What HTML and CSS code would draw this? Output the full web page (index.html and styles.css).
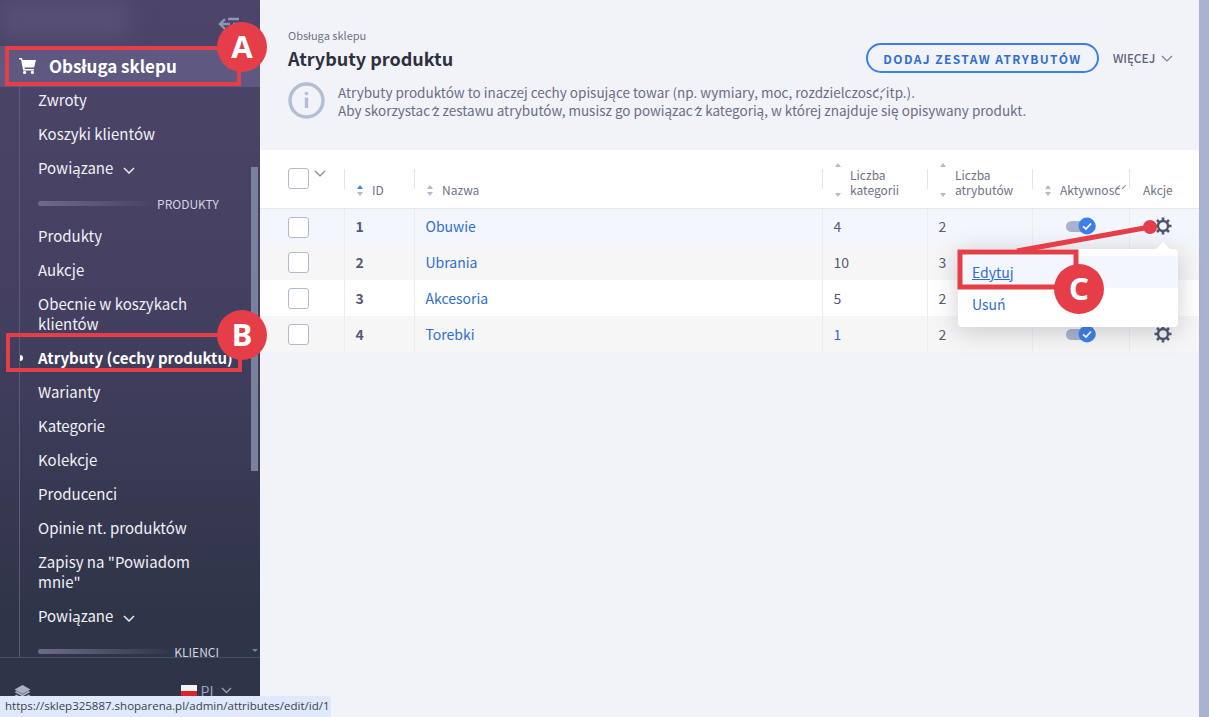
FILE: index.html
```html
<!DOCTYPE html>
<html lang="pl">
<head>
    <meta charset="UTF-8">
    <title>Atrybuty produktu</title>
    <link rel="stylesheet" href="styles.css">
</head>
<body>
<div class="app">
    <aside class="sidebar">
        <div class="sidebar-top">
            <div class="logo-blur"></div>
            <svg class="collapse-icon" width="22" height="14" viewBox="0 0 22 14"><path d="M7 2 2 7l5 5M2 7h10M10 2h11M15 7h6M15 12h6" fill="none" stroke="#8f93b8" stroke-width="2.4"/></svg>
        </div>
        <div class="module-row">
            <svg class="cart-icon" width="17" height="17" viewBox="0 0 17 17"><path d="M0 1h3l.6 2H17l-2 7.5H5.4L5.8 12H15v1.6H4.2L2 2.6H0z" fill="#fff"/><circle cx="5.6" cy="15.4" r="1.6" fill="#fff"/><circle cx="13.4" cy="15.4" r="1.6" fill="#fff"/></svg>
            <span>Obsługa sklepu</span>
        </div>
        <nav class="nav">
            <a class="nav-item">Zwroty</a>
            <a class="nav-item">Koszyki klientów</a>
            <a class="nav-item">Powiązane <svg class="nav-chevron" width="12" height="7" viewBox="0 0 12 7"><path d="m1 1 5 5 5-5" fill="none" stroke="#e9e8f0" stroke-width="1.5"/></svg></a>
            <div class="nav-sep"><i></i><span>PRODUKTY</span></div>
            <a class="nav-item">Produkty</a>
            <a class="nav-item">Aukcje</a>
            <a class="nav-item">Obecnie w koszykach klientów</a>
            <a class="nav-item current">Atrybuty (cechy produktu)</a>
            <a class="nav-item">Warianty</a>
            <a class="nav-item">Kategorie</a>
            <a class="nav-item">Kolekcje</a>
            <a class="nav-item">Producenci</a>
            <a class="nav-item">Opinie nt. produktów</a>
            <a class="nav-item">Zapisy na "Powiadom mnie"</a>
            <a class="nav-item">Powiązane <svg class="nav-chevron" width="12" height="7" viewBox="0 0 12 7"><path d="m1 1 5 5 5-5" fill="none" stroke="#e9e8f0" stroke-width="1.5"/></svg></a>
            <div class="nav-sep"><i></i><span>KLIENCI</span></div>
            <a class="nav-item">Klienci</a>
            <div class="nav-thumb"></div>
            <div class="nav-arrow"></div>
        </nav>
        <div class="sidebar-foot">
            <svg class="layers-icon" width="17" height="16" viewBox="0 0 17 16"><path d="m8.500 0 8 4.500-8 4.500-8-4.500zM.5 7l2-1 6 3.500 6-3.500 2 1-8 4.500zM.5 10.500l2-1 6 3.500 6-3.500 2 1-8 4.500z" fill="#a9b0c6"/></svg>
            <div class="lang">
                <span class="flag"></span>
                <span>PL</span>
                <svg width="11" height="7" viewBox="0 0 11 7"><path d="m1 1 4.500 4.500L10 1" fill="none" stroke="#9aa1b8" stroke-width="1.3"/></svg>
            </div>
        </div>
    </aside>

    <main class="main">
        <header class="page-head">
            <div class="crumb">Obsługa sklepu</div>
            <div class="title-row">
                <h1>Atrybuty produktu</h1>
                <div class="actions">
                    <button class="btn-outline">DODAJ ZESTAW ATRYBUTÓW</button>
                    <span class="more">WIĘCEJ <svg width="12" height="7" viewBox="0 0 12 7"><path d="m1 1 5 5 5-5" fill="none" stroke="#7d8199" stroke-width="1.2"/></svg></span>
                </div>
            </div>
            <div class="info">
                <svg width="37" height="37" viewBox="0 0 37 37"><circle cx="18.500" cy="18.500" r="16.500" fill="none" stroke="#b3bdd4" stroke-width="3.400"/><circle cx="18.500" cy="11.500" r="1.800" fill="#b3bdd4"/><rect x="16.800" y="15.500" width="3.400" height="10.500" fill="#b3bdd4"/></svg>
                <p>Atrybuty produktów to inaczej cechy opisujące towar (np. wymiary, moc, rozdzielczość, itp.).<br>Aby skorzystać z zestawu atrybutów, musisz go powiązać z kategorią, w której znajduje się opisywany produkt.</p>
            </div>
        </header>

        <table class="grid">
            <colgroup>
                <col class="c-check"><col class="c-id"><col class="c-name"><col class="c-num"><col class="c-num"><col class="c-active"><col>
            </colgroup>
            <thead>
                <tr>
                    <th class="th-check"><span class="box"></span><svg class="th-chevron" width="12" height="7" viewBox="0 0 12 7"><path d="m1 1 5 5 5-5" fill="none" stroke="#7d8199" stroke-width="1.2"/></svg></th>
                    <th><span class="sort asc"></span>ID</th>
                    <th><span class="sort"></span>Nazwa</th>
                    <th class="th-two"><span class="sort tall"></span><span>Liczba<br>kategorii</span></th>
                    <th class="th-two"><span class="sort tall"></span><span>Liczba<br>atrybutów</span></th>
                    <th><span class="sort"></span>Aktywność</th>
                    <th class="th-last">Akcje</th>
                </tr>
            </thead>
            <tbody>
                <tr class="hover">
                    <td><span class="box"></span></td><td class="id">1</td><td><a class="link">Obuwie</a></td><td>4</td><td>2</td>
                    <td class="t-center"><span class="toggle"><svg width="18" height="18" viewBox="0 0 18 18"><circle cx="9" cy="9" r="8.500" fill="#3b80e8"/><path d="m5 9.300 3 2.700 5-5.500" fill="none" stroke="#fff" stroke-width="1.800"/></svg></span></td>
                    <td class="t-gear"><svg class="gear" width="18" height="18" viewBox="0 0 18 18"><use href="#gear"/></svg></td>
                </tr>
                <tr class="odd">
                    <td><span class="box"></span></td><td class="id">2</td><td><a class="link">Ubrania</a></td><td>10</td><td>3</td>
                    <td class="t-center"><span class="toggle"><svg width="18" height="18" viewBox="0 0 18 18"><circle cx="9" cy="9" r="8.500" fill="#3b80e8"/><path d="m5 9.300 3 2.700 5-5.500" fill="none" stroke="#fff" stroke-width="1.800"/></svg></span></td>
                    <td class="t-gear"><svg class="gear" width="18" height="18" viewBox="0 0 18 18"><use href="#gear"/></svg></td>
                </tr>
                <tr>
                    <td><span class="box"></span></td><td class="id">3</td><td><a class="link">Akcesoria</a></td><td>5</td><td>2</td>
                    <td class="t-center"><span class="toggle"><svg width="18" height="18" viewBox="0 0 18 18"><circle cx="9" cy="9" r="8.500" fill="#3b80e8"/><path d="m5 9.300 3 2.700 5-5.500" fill="none" stroke="#fff" stroke-width="1.800"/></svg></span></td>
                    <td class="t-gear"><svg class="gear" width="18" height="18" viewBox="0 0 18 18"><use href="#gear"/></svg></td>
                </tr>
                <tr class="odd">
                    <td><span class="box"></span></td><td class="id">4</td><td><a class="link">Torebki</a></td><td><a class="link">1</a></td><td>2</td>
                    <td class="t-center"><span class="toggle"><svg width="18" height="18" viewBox="0 0 18 18"><circle cx="9" cy="9" r="8.500" fill="#3b80e8"/><path d="m5 9.300 3 2.700 5-5.500" fill="none" stroke="#fff" stroke-width="1.800"/></svg></span></td>
                    <td class="t-gear"><svg class="gear" width="18" height="18" viewBox="0 0 18 18"><use href="#gear"/></svg></td>
                </tr>
            </tbody>
        </table>
    </main>
    <div class="page-scroll"></div>
</div>

<!-- menu akcji nad tabela -->
<div class="menu">
    <a class="menu-item active">Edytuj</a>
    <a class="menu-item">Usuń</a>
</div>

<!-- adnotacje na zrzucie -->
<svg class="marks" width="1209" height="717" viewBox="0 0 1209 717">
    <defs>
        <symbol id="gear" viewBox="0 0 18 18">
            <circle cx="9" cy="9" r="5" fill="none" stroke="#4f5570" stroke-width="2.400"/>
            <path d="M9 .5v3.500M9 14v3.500M.5 9H4M14 9h3.500M3 3l2.500 2.500M12.500 12.500 15 15M15 3l-2.500 2.500M5.500 12.500 3 15" stroke="#4f5570" stroke-width="2.600"/>
        </symbol>
    </defs>
    <g fill="none" stroke="#e53e48">
        <rect x="7" y="48" width="232" height="36" stroke-width="4"/>
        <rect x="8" y="335" width="232" height="35" stroke-width="4"/>
        <rect x="960" y="252" width="116" height="35" stroke-width="5"/>
        <path d="M1017 251 1150 227" stroke-width="5"/>
    </g>
    <g fill="#e53e48">
        <circle cx="242" cy="47" r="25"/>
        <circle cx="242" cy="335" r="25"/>
        <circle cx="1079" cy="289" r="25"/>
        <circle cx="1150" cy="227" r="7"/>
    </g>
    <g class="mark-text">
        <text x="242" y="58">A</text>
        <text x="242" y="346">B</text>
        <text x="1079" y="300">C</text>
    </g>
</svg>

<div class="status-url">https://sklep325887.shoparena.pl/admin/attributes/edit/id/1</div>
</body>
</html>
```
FILE: styles.css
```css
* {
    box-sizing: border-box;
}

html, body {
    margin: 0;
    height: 100%;
    overflow: hidden;
}

body {
    position: relative;
    font-family: "Noto Sans CJK SC", "Noto Sans", sans-serif;
    font-size: 13px;
    color: #5a5f7a;
    background-color: #f2f3f8;
}

.app {
    display: flex;
    height: 717px;
}

/* sidebar */
.sidebar {
    position: relative;
    flex: 0 0 260px;
    display: flex;
    flex-direction: column;
    overflow: hidden;
    background: linear-gradient(180deg, #4c4569 0%, #454062 40%, #2f3549 85%, #2f3549 100%);
}

.sidebar-top {
    position: relative;
    height: 46px;
    flex: none;
}

.logo-blur {
    position: absolute;
    left: 0;
    top: 0;
    width: 130px;
    height: 38px;
    background-color: #574f74;
    filter: blur(10px);
}

.collapse-icon {
    position: absolute;
    left: 218px;
    top: 17px;
}

.module-row {
    display: flex;
    align-items: center;
    height: 41px;
    flex: none;
    padding-left: 19px;
    padding-bottom: 2px;
    background-color: #5f5880;
    color: #fff;
    font-size: 17px;
    font-weight: 700;
}

.cart-icon {
    margin-right: 13px;
}

.nav {
    position: relative;
    flex: 1;
    min-height: 0;
    overflow: hidden;
    margin-left: 19px;
    padding: 0 41px 0 0;
    border-left: 1px solid #5d5a7a;
}

.nav-item {
    display: block;
    padding: 7px 0 7px 18px;
    font-size: 15px;
    line-height: 20px;
    color: #f1f0f5;
}

.nav-item:first-child {
    margin-top: -4px;
}

.nav-chevron {
    margin-left: 6px;
    vertical-align: 0;
}

.nav-item.current {
    position: relative;
    color: #fff;
    font-weight: 700;
    white-space: nowrap;
}

.nav-item.current::before {
    content: "";
    position: absolute;
    left: -3px;
    top: 14px;
    width: 6px;
    height: 6px;
    border-radius: 50%;
    background-color: #fff;
}

.nav-sep {
    display: flex;
    align-items: center;
    height: 34px;
    padding-left: 18px;
    padding-top: 3px;
    font-size: 12px;
    color: #d5d4e0;
}

.nav-sep i {
    flex: 1;
    height: 5px;
    border-radius: 3px;
    background: linear-gradient(90deg, #6e6b8a, rgba(110, 107, 138, 0));
}

.nav-sep span {
    margin-left: 0;
}

.nav-thumb {
    position: absolute;
    right: 2px;
    top: 80px;
    width: 7px;
    height: 304px;
    background-color: #7a819f;
}

.nav-arrow {
    position: absolute;
    right: 2px;
    bottom: 5px;
    border-left: 3px solid transparent;
    border-right: 3px solid transparent;
    border-top: 3px solid #7a819f;
}

.sidebar-foot {
    display: flex;
    justify-content: space-between;
    height: 60px;
    flex: none;
    padding: 27px 28px 0 14px;
    border-top: 1px solid #4a4f68;
    color: #9aa1b8;
}

.lang {
    display: flex;
    align-items: center;
    gap: 4px;
    height: 11px;
    font-size: 14px;
}

.flag {
    width: 16px;
    height: 11px;
    background: linear-gradient(180deg, #f4f4f4 50%, #e0202a 50%);
}

/* main */
.main {
    flex: 1;
    min-width: 0;
}

.page-head {
    height: 150px;
    padding: 28px 26px 0 28px;
}

.crumb {
    font-size: 11px;
    line-height: 14px;
    color: #6f7288;
}

.title-row {
    display: flex;
    align-items: center;
    justify-content: space-between;
    margin-top: 1px;
}

h1 {
    margin: 0;
    font-size: 18px;
    line-height: 30px;
    font-weight: 600;
    color: #2c3040;
}

.actions {
    display: flex;
    align-items: center;
    gap: 14px;
}

.btn-outline {
    height: 30px;
    padding: 0 15px;
    border: 2px solid #3b80e8;
    border-radius: 15px;
    background: none;
    font-family: inherit;
    font-size: 12px;
    font-weight: 600;
    letter-spacing: 1.4px;
    color: #2f6fd0;
}

.more {
    font-size: 12px;
    font-weight: 500;
    color: #5f6380;
}

.more svg {
    margin-left: 3px;
    vertical-align: 1px;
}

.info {
    display: flex;
    align-items: center;
    gap: 13px;
    margin-top: 9px;
}

.info p {
    margin: 0;
    font-size: 13.500px;
    line-height: 18px;
    color: #6a6d86;
}

.grid {
    width: 939px;
    table-layout: fixed;
    border-collapse: collapse;
    background-color: #fff;
}

.c-check { width: 84px; }
.c-id { width: 70px; }
.c-name { width: 408px; }
.c-num { width: 105px; }
.c-active { width: 97px; }

th {
    position: relative;
    height: 58px;
    padding: 0 0 11px 13px;
    vertical-align: bottom;
    text-align: left;
    font-size: 12px;
    line-height: 15px;
    font-weight: 400;
    color: #6f7288;
    border-bottom: 1px solid #e8e9ef;
}

th + th::before {
    content: "";
    position: absolute;
    left: 0;
    top: 19px;
    height: 20px;
    border-left: 1px solid #e3e4ea;
}

.th-check {
    padding: 0 0 0 28px;
    vertical-align: middle;
}

.th-check .box {
    vertical-align: middle;
}

.th-chevron {
    margin-left: 5px;
    vertical-align: 5px;
}

.th-two span:last-child {
    display: inline-block;
    vertical-align: bottom;
}

.th-last {
    padding-left: 14px;
}

.sort {
    display: inline-block;
    position: relative;
    width: 7px;
    height: 11px;
    margin-right: 8px;
    vertical-align: -1px;
}

.sort::before, .sort::after {
    content: "";
    position: absolute;
    left: 0;
    border-left: 3.500px solid transparent;
    border-right: 3.500px solid transparent;
}

.sort::before {
    top: 0;
    border-bottom: 4px solid #b3bad0;
}

.sort::after {
    bottom: 0;
    border-top: 4px solid #b3bad0;
}

.sort.asc::before {
    border-bottom-color: #3b80e8;
}

.sort.tall {
    height: 34px;
    vertical-align: bottom;
}

td {
    height: 36px;
    padding: 0 0 0 11px;
    font-size: 14px;
    color: #555a75;
    border-left: 1px solid #ebecf1;
}

td:first-child {
    padding-left: 28px;
    border-left: none;
}

td.id {
    font-weight: 700;
}

tr.hover td {
    background-color: #f3f6fd;
}

tr.odd td {
    background-color: #f6f6f6;
}

.box {
    display: inline-block;
    width: 21px;
    height: 21px;
    border: 1px solid #b3bad0;
    border-radius: 3px;
    background-color: #fff;
    vertical-align: middle;
}

.link {
    color: #2f6fd0;
}

td.t-center {
    padding: 0 0 0 33px;
}

.toggle {
    display: block;
    position: relative;
    width: 30px;
    height: 11px;
    border-radius: 6px;
    background-color: #a9b3cf;
}

.toggle svg {
    position: absolute;
    right: 0;
    top: -4px;
}

td.t-gear {
    padding-left: 24px;
}

.gear {
    display: block;
}

.page-scroll {
    flex: 0 0 10px;
    background-color: #a9b3cf;
}

/* menu */
.menu {
    position: absolute;
    left: 958px;
    top: 249px;
    width: 220px;
    height: 78px;
    padding-top: 7px;
    border-radius: 4px;
    background-color: #fff;
    box-shadow: 0 4px 24px rgba(60, 64, 90, 0.25);
}

.menu::before {
    content: "";
    position: absolute;
    left: 198px;
    top: -7px;
    border-left: 7px solid transparent;
    border-right: 7px solid transparent;
    border-bottom: 7px solid #fff;
}

.menu-item {
    display: block;
    height: 32px;
    padding-left: 14px;
    font-size: 14px;
    line-height: 32px;
    color: #2f6fd0;
}

.menu-item.active {
    background-color: #f3f6fd;
    text-decoration: underline;
}

/* adnotacje */
.marks {
    position: absolute;
    left: 0;
    top: 0;
    pointer-events: none;
}

.mark-text text {
    font-family: "Noto Sans", sans-serif;
    font-size: 31px;
    font-weight: 700;
    fill: #fff;
    text-anchor: middle;
}

.status-url {
    position: absolute;
    left: 0;
    bottom: 0;
    width: 331px;
    height: 21px;
    padding-left: 5px;
    border-top-right-radius: 4px;
    background-color: #dfe9fb;
    font-family: "Open Sans", sans-serif;
    font-size: 11.500px;
    line-height: 20px;
    color: #3a3f4c;
    white-space: nowrap;
}
```
